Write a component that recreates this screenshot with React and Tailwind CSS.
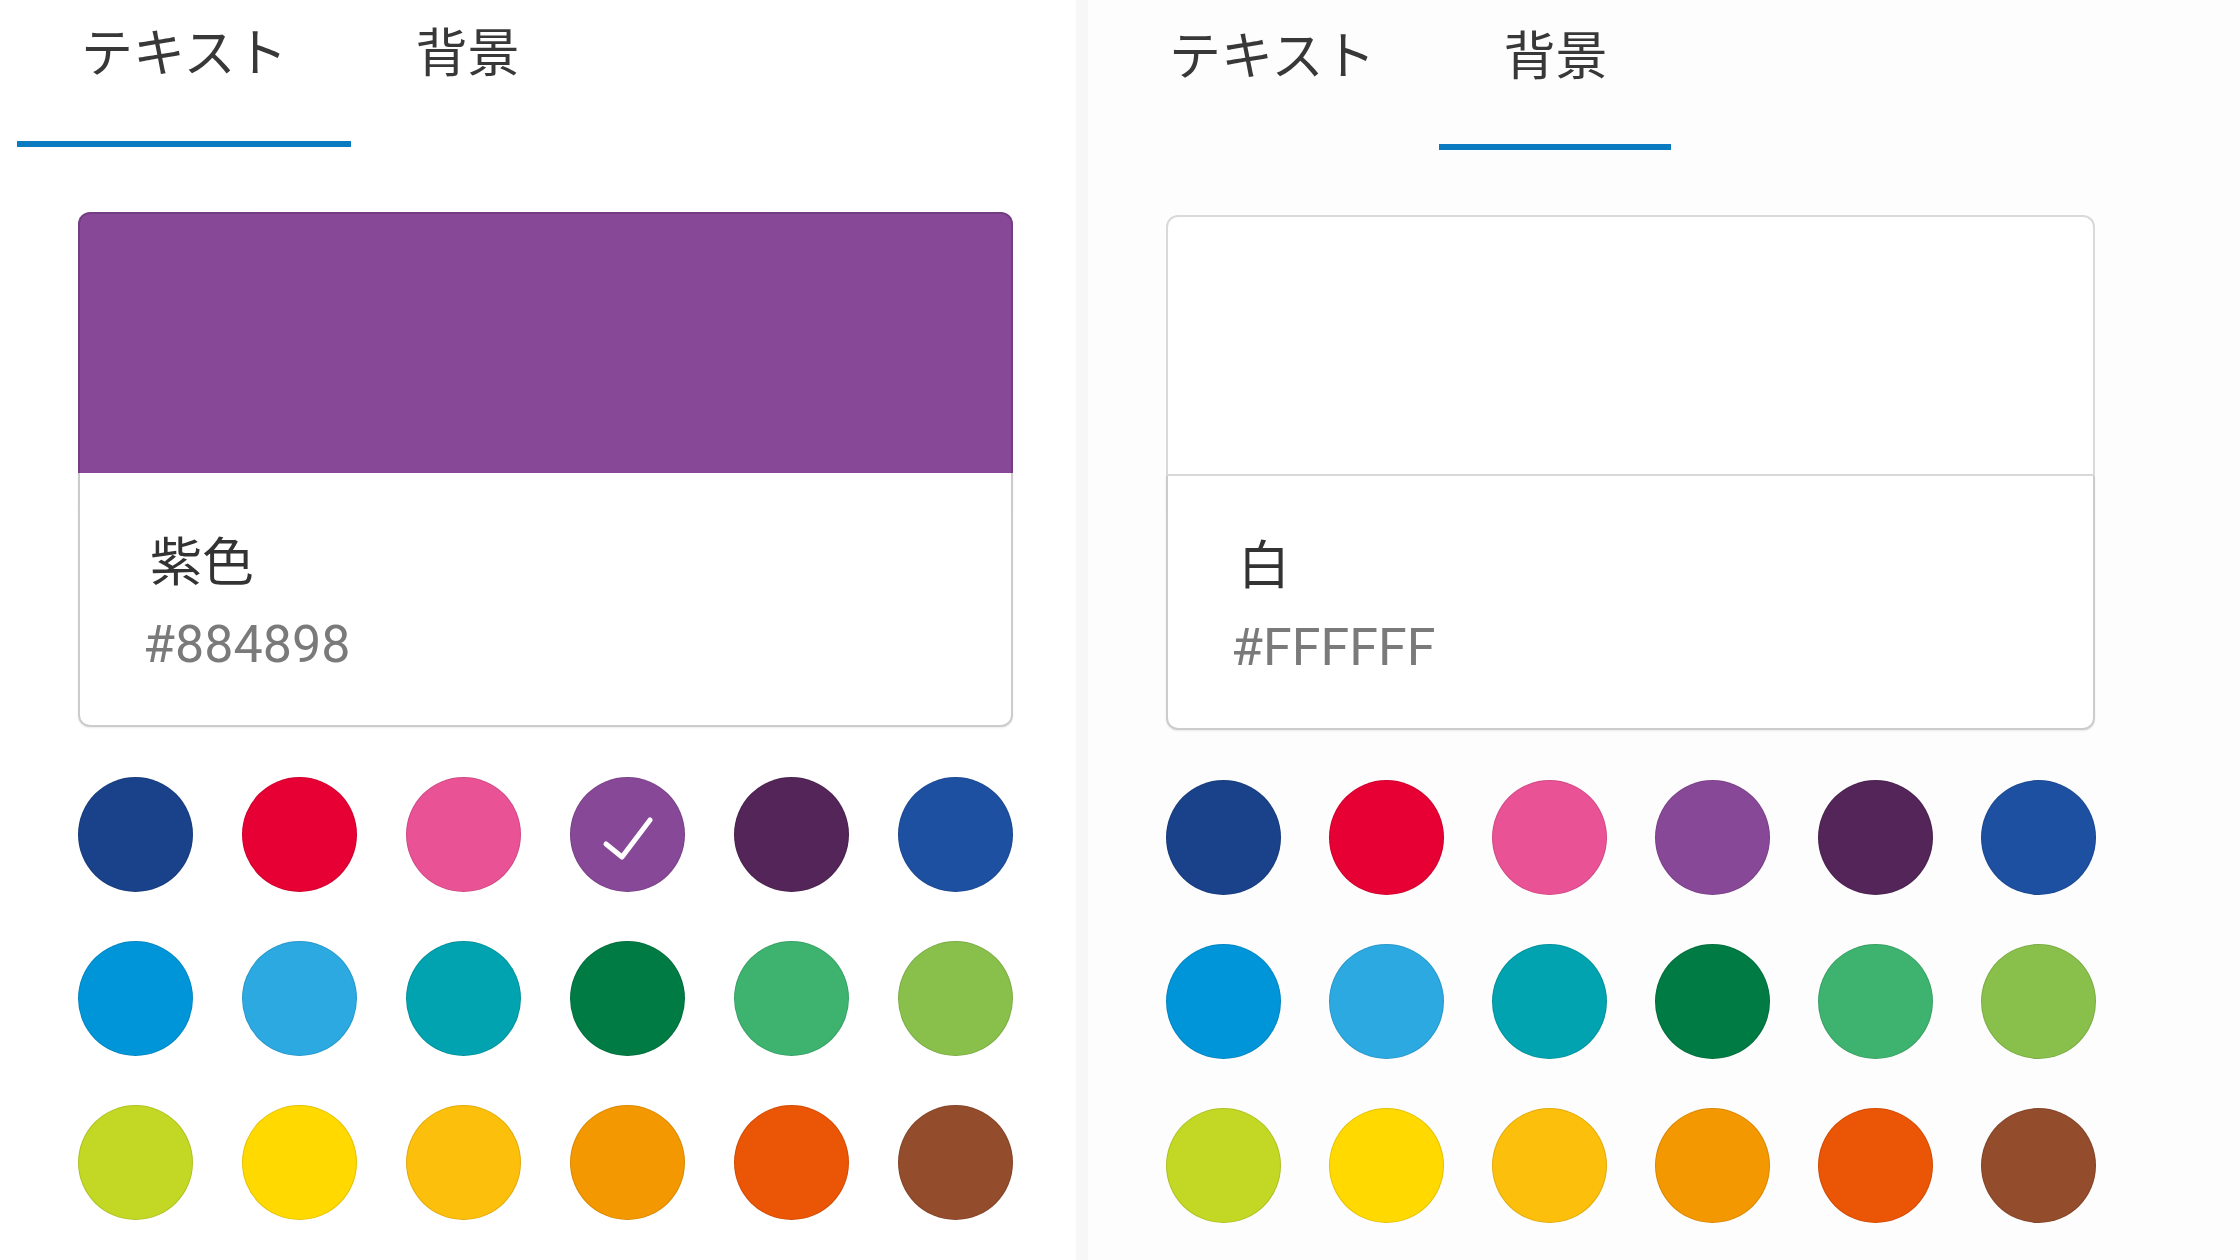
import { useState } from 'react'

const palette = [
  '#1a428a', '#e60033', '#e95295', '#884898', '#532558', '#1e50a2',
  '#0095d9', '#2ca9e1', '#00a3af', '#007b43', '#3eb370', '#89c04b',
  '#c3d825', '#ffd900', '#fcbf0b', '#f39800', '#ea5506', '#934c2c',
]

const names = {
  '#884898': '紫色',
  '#FFFFFF': '白',
}

function CheckIcon() {
  return (
    <svg viewBox="0 0 113 113" className="w-full h-full">
      <path
        d="M35 66 L51 79 L79 42"
        fill="none"
        stroke="white"
        strokeWidth={5}
        strokeLinecap="round"
        strokeLinejoin="round"
      />
    </svg>
  )
}

function ColorPanel({ initialTab, color, selected, wide }) {
  const [tab, setTab] = useState(initialTab)
  const isWhite = color === '#FFFFFF'

  return (
    <div className="flex flex-col">
      {/* Tabs */}
      <div className="flex pl-[17px]">
        {['テキスト', '背景'].map((label, i) => (
          <button
            key={label}
            onClick={() => setTab(i)}
            className={`h-[147px] px-[64px] pt-[19px] flex items-start text-[52px] leading-[62px] text-[#383838] border-b-[6px] ${
              tab === i ? 'border-[#0b7bc1]' : 'border-transparent'
            }`}
          >
            {label}
          </button>
        ))}
      </div>

      {/* Preview card */}
      <div className={`ml-[78px] mt-[65px] ${wide ? 'w-[935px]' : 'w-[929px]'}`}>
        <div
          className={`h-[261px] rounded-t-[12px] border-2 border-black/15 ${
            isWhite ? '' : 'border-b-0'
          }`}
          style={{ backgroundColor: color }}
        />
        <div className="h-[254px] rounded-b-[12px] border-2 border-t-0 border-black/20 bg-white pl-[70px] pt-[55px] shadow-[0_1px_2px_rgba(0,0,0,0.08)]">
          <div className="text-[52px] leading-[62px] text-[#333]">{names[color]}</div>
          <div className="mt-[25px] -ml-[7px] text-[52px] leading-[60px] text-[#7a7a7a] [font-family:Roboto,'Noto_Sans_CJK_JP',sans-serif]">
            {color}
          </div>
        </div>
      </div>

      {/* Swatches */}
      <div
        className={`ml-[78px] mt-[50px] grid grid-cols-[repeat(6,115px)] ${
          wide ? 'gap-[49px]' : 'gap-x-[48px] gap-y-[49px]'
        }`}
      >
        {palette.map((c) => (
          <div
            key={c}
            className="w-[115px] h-[115px] rounded-full border border-black/10"
            style={{ backgroundColor: c }}
          >
            {c === selected && <CheckIcon />}
          </div>
        ))}
      </div>
    </div>
  )
}

export default function App() {
  return (
    <div className="flex w-[2240px] h-[1260px] bg-white overflow-hidden [font-family:'Noto_Sans_CJK_JP','Noto_Sans',sans-serif]">
      <div className="w-[1076px] shrink-0">
        <ColorPanel initialTab={0} color="#884898" selected="#884898" wide />
      </div>
      <div className="w-[12px] shrink-0 bg-[#f7f7f7]" />
      <div className="flex-1 pt-[3px] bg-[#fdfdfd]">
        <ColorPanel initialTab={1} color="#FFFFFF" selected={null} />
      </div>
    </div>
  )
}
